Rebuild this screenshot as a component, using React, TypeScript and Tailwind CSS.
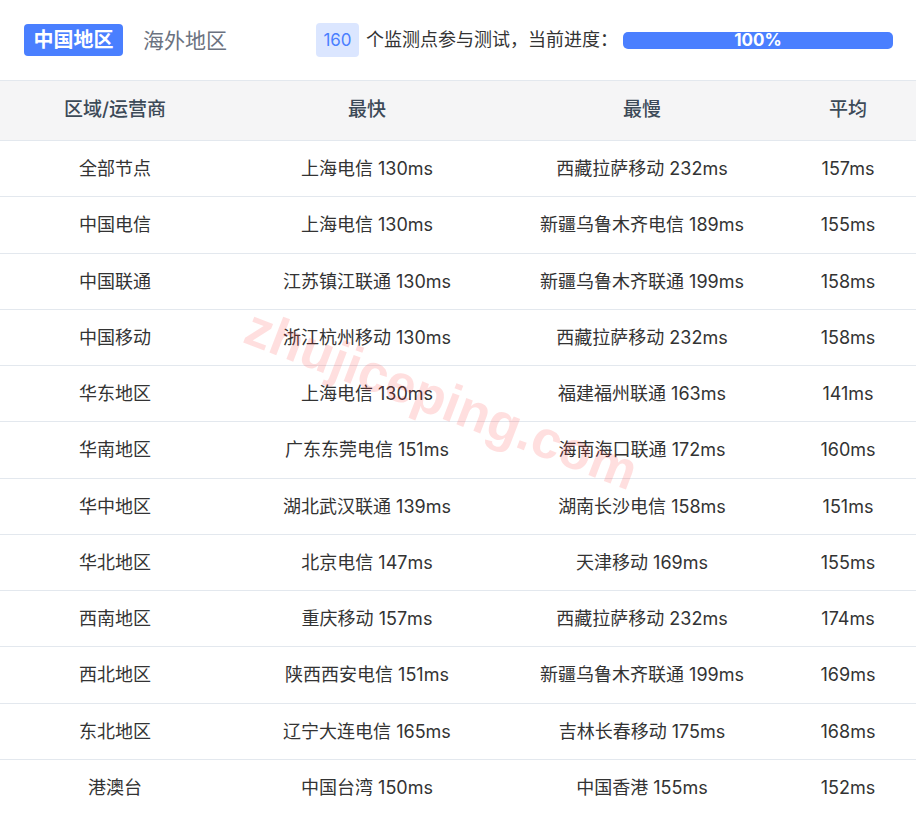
import React from "react";

const rows: [string, string, string, string][] = [
  ["全部节点", "上海电信 130ms", "西藏拉萨移动 232ms", "157ms"],
  ["中国电信", "上海电信 130ms", "新疆乌鲁木齐电信 189ms", "155ms"],
  ["中国联通", "江苏镇江联通 130ms", "新疆乌鲁木齐联通 199ms", "158ms"],
  ["中国移动", "浙江杭州移动 130ms", "西藏拉萨移动 232ms", "158ms"],
  ["华东地区", "上海电信 130ms", "福建福州联通 163ms", "141ms"],
  ["华南地区", "广东东莞电信 151ms", "海南海口联通 172ms", "160ms"],
  ["华中地区", "湖北武汉联通 139ms", "湖南长沙电信 158ms", "151ms"],
  ["华北地区", "北京电信 147ms", "天津移动 169ms", "155ms"],
  ["西南地区", "重庆移动 157ms", "西藏拉萨移动 232ms", "174ms"],
  ["西北地区", "陕西西安电信 151ms", "新疆乌鲁木齐联通 199ms", "169ms"],
  ["东北地区", "辽宁大连电信 165ms", "吉林长春移动 175ms", "168ms"],
  ["港澳台", "中国台湾 150ms", "中国香港 155ms", "152ms"],
];

export default function App() {
  return (
    <div
      className="relative w-[916px] h-[822px] overflow-hidden bg-white"
      style={{ fontFamily: '"Inter", "Noto Sans CJK SC", sans-serif' }}
    >
      <div className="flex items-center h-[80px] pl-[24px] pr-[23px]">
        <div className="h-[32px] w-[99px] flex items-center justify-center rounded-[4px] bg-[#4a7fff] text-white text-[20px] font-bold leading-none">
          中国地区
        </div>
        <div className="ml-[20px] text-[21px] text-[#6b7280] leading-none">海外地区</div>
        <div className="ml-[89px] h-[34px] w-[43px] flex items-center justify-center rounded-[4px] bg-[#dbe6ff] text-[#4a7fff] text-[17px] leading-none">
          160
        </div>
        <div className="ml-[7px] text-[18px] text-[#333] leading-none">个监测点参与测试，当前进度：</div>
        <div className="ml-auto w-[270px] h-[17px] rounded-[5px] bg-[#4a7fff] flex items-center justify-center text-white text-[17px] font-bold leading-none">
          100%
        </div>
      </div>
      <div className="grid grid-cols-[230px_274px_276px_136px] h-[61px] bg-[#f5f5f6] border-y border-[#e3e8ee] items-center text-center text-[19px] font-medium text-[#3d4a58]">
        <div>区域/运营商</div>
        <div>最快</div>
        <div>最慢</div>
        <div>平均</div>
      </div>
      {rows.map((r, i) => (
        <div
          key={i}
          className={`grid grid-cols-[230px_274px_276px_136px] h-[56.25px] items-center text-center text-[18px] text-[#333] ${
            i < rows.length - 1 ? "border-b border-[#e3e8ee]" : ""
          }`}
        >
          <div>{r[0]}</div>
          <div>{r[1]}</div>
          <div>{r[2]}</div>
          <div>{r[3]}</div>
        </div>
      ))}
      <div
        className="absolute left-[248px] top-[298px] pointer-events-none text-[53px] font-bold text-[rgba(255,40,40,0.15)] leading-none whitespace-nowrap origin-left rotate-[21deg]"
        style={{ fontFamily: '"Liberation Sans", sans-serif' }}
      >
        zhujiceping.com
      </div>
    </div>
  );
}
